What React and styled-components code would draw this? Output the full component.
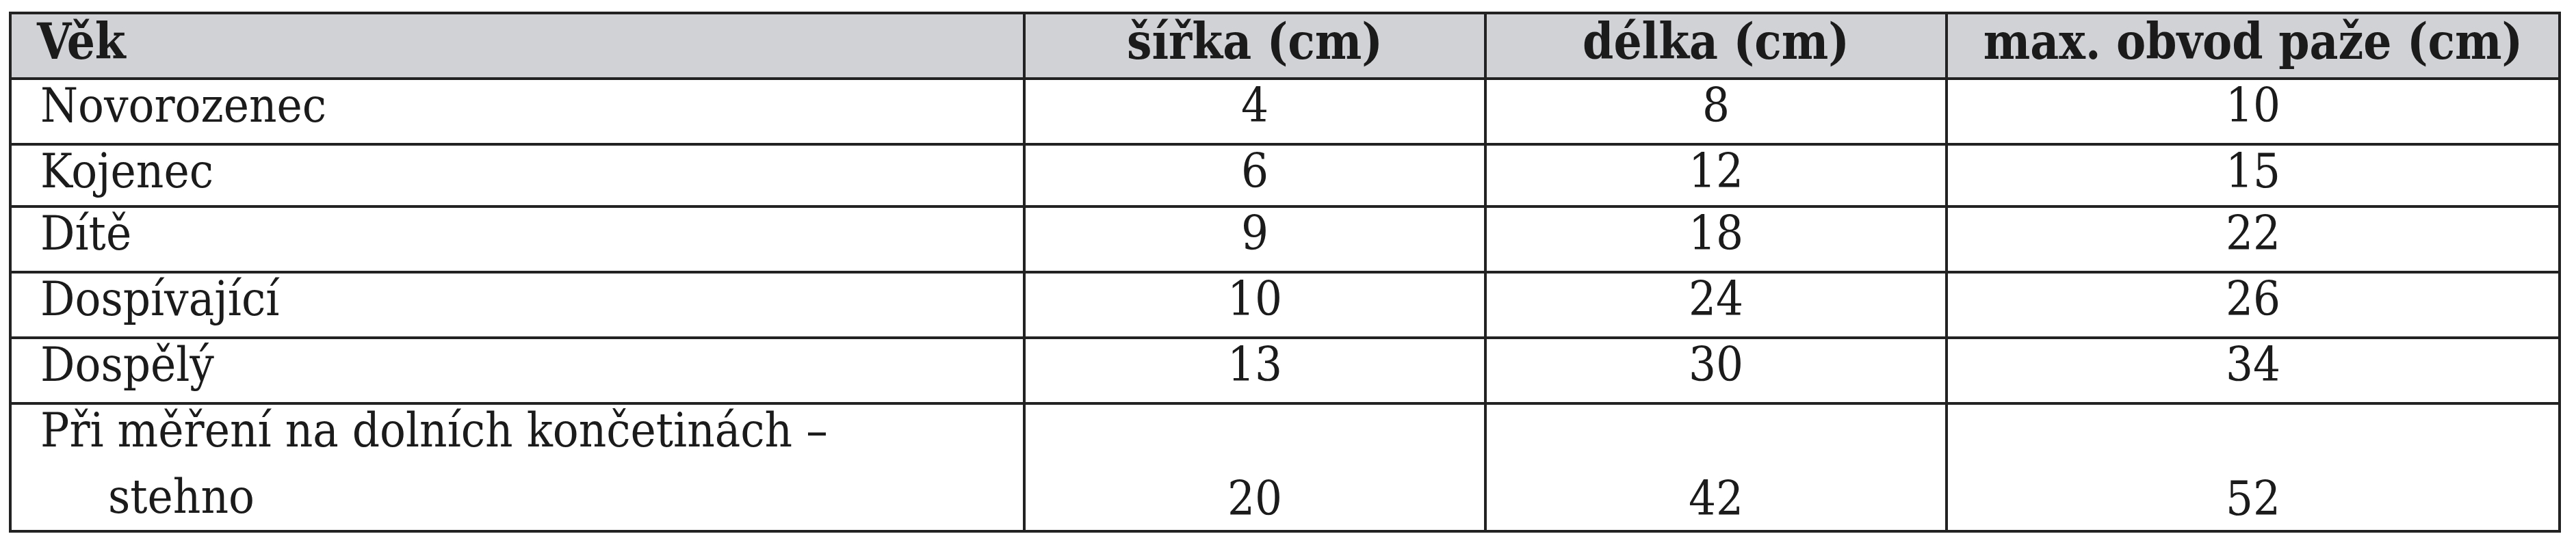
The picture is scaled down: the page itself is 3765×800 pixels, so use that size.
import React from "react";
import styled, { createGlobalStyle } from "styled-components";

const GlobalStyle = createGlobalStyle`
  html, body {
    margin: 0;
    padding: 0;
    background: #ffffff;
  }
`;

const Page = styled.div`
  padding: 17px 0 0 13px;
  width: 3765px;
  height: 800px;
  box-sizing: border-box;
  color: #1b1b1b;
`;

const Table = styled.div`
  display: grid;
  grid-template-columns: 1482px 674px 674px 896px;
  grid-template-rows: 96px 96px 91px 96px 96px 96px 187px;
  width: 3730px;
  box-sizing: border-box;
  border-top: 4px solid #222;
  border-left: 4px solid #222;
`;

const Cell = styled.div`
  box-sizing: border-box;
  border-right: 4px solid #222;
  border-bottom: 4px solid #222;
  display: flex;
  flex-direction: column;
  justify-content: ${(p) => (p.$bottom ? "flex-end" : "flex-start")};
  align-items: ${(p) => (p.$left ? "flex-start" : "center")};
  padding: ${(p) => (p.$left ? "0 0 0 42px" : "0")};
  padding-bottom: ${(p) => (p.$bottom ? "9px" : "0")};
  font-family: "DejaVu Serif Condensed", "DejaVu Serif", serif;
  font-stretch: condensed;
  font-size: 70px;
  line-height: 74px;
  white-space: nowrap;
`;

const HeadCell = styled(Cell)`
  background: #d1d2d6;
  font-weight: bold;
  font-size: 72px;
  line-height: 80px;
  padding-left: ${(p) => (p.$left ? "37px" : "0")};
`;

const Lines = styled.div`
  display: flex;
  flex-direction: column;
  gap: 23px;
`;

const Line = styled.span`
  display: block;
  padding-left: ${(p) => (p.$indent ? "99px" : "0")};
`;

const headers = ["Věk", "šířka (cm)", "délka (cm)", "max. obvod paže (cm)"];

const rows = [
  ["Novorozenec", "4", "8", "10"],
  ["Kojenec", "6", "12", "15"],
  ["Dítě", "9", "18", "22"],
  ["Dospívající", "10", "24", "26"],
  ["Dospělý", "13", "30", "34"],
];

const last = ["20", "42", "52"];

export default function App() {
  return (
    <>
      <GlobalStyle />
      <Page>
        <Table>
          {headers.map((h, i) => (
            <HeadCell key={h} $left={i === 0}>
              {h}
            </HeadCell>
          ))}
          {rows.map((r) =>
            r.map((v, i) => (
              <Cell key={r[0] + i} $left={i === 0}>
                {v}
              </Cell>
            ))
          )}
          <Cell $left>
            <Lines>
              <Line>Při měření na dolních končetinách –</Line>
              <Line $indent>stehno</Line>
            </Lines>
          </Cell>
          {last.map((v) => (
            <Cell key={v} $bottom>
              {v}
            </Cell>
          ))}
        </Table>
      </Page>
    </>
  );
}
